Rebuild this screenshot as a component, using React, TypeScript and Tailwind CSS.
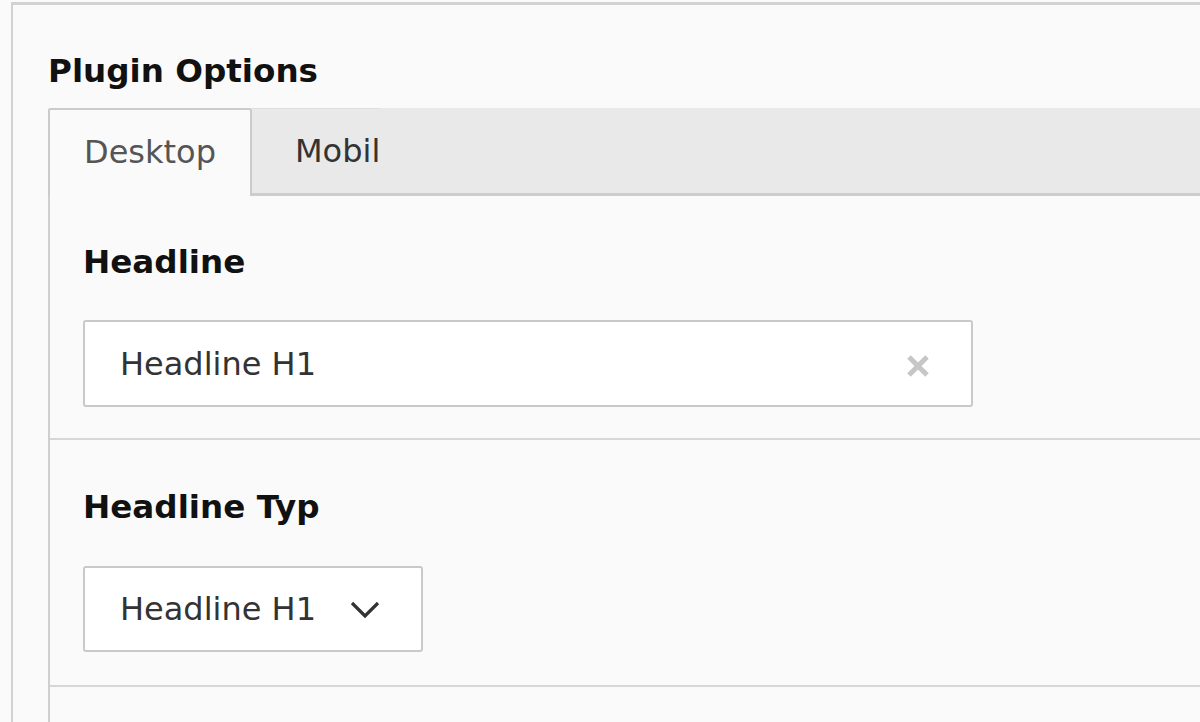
import React from "react";

export default function App() {
  return (
    <div className="h-[722px] w-[1200px] overflow-hidden bg-[#fafafa] pt-[2px] font-['DejaVu_Sans',Verdana,sans-serif] text-[32px]">
      <div className="ml-[11px] h-[760px] border-l-2 border-t-[3px] border-[#d2d2d2] bg-[#fafafa] pl-[35px] pt-[44px]">
        <div className="text-[32.6px] font-bold leading-[44px] text-[#111]">Plugin Options</div>

        <div className="mt-[15px] flex h-[88px] border-b-[3px] border-[#cdcdcd] bg-[#e9e9e9]">
          <div className="-mb-[3px] flex h-[88px] w-[204px] items-center rounded-t-[3px] border-2 border-b-0 border-[#cbcbcb] bg-[#fafafa] pb-[2px] pl-[34px] text-[#555]">
            Desktop
          </div>
          <div className="flex items-center border-t border-[#dedede] pl-[43px] text-[#333]">Mobil</div>
        </div>

        <div className="h-[600px] border-l-2 border-[#cfcfcf]">
          <div className="border-b-2 border-[#d6d6d6] pb-[31px] pl-[33px] pt-[44px]">
            <div className="text-[32.6px] font-bold leading-[44px] text-[#111]">Headline</div>
            <div className="mt-[36px] flex h-[87px] w-[890px] items-center justify-between rounded-[3px] border-2 border-[#c9c9c9] bg-white pl-[35px] pr-[41px] text-[#333]">
              <span>Headline H1</span>
              <svg width="24" height="24" viewBox="0 0 24 24" className="mt-[4px]">
                <path d="M3 3 L21 21 M21 3 L3 21" stroke="#c6c6c6" strokeWidth="5" strokeLinecap="butt" fill="none" />
              </svg>
            </div>
          </div>

          <div className="border-b-2 border-[#d6d6d6] pb-[33px] pl-[33px] pt-[45px]">
            <div className="text-[32.6px] font-bold leading-[44px] text-[#111]">Headline Typ</div>
            <div className="mt-[37px] flex h-[86px] w-[340px] items-center justify-between rounded-[3px] border-2 border-[#c9c9c9] bg-white pl-[35px] pr-[41px] text-[#333]">
              <span>Headline H1</span>
              <svg width="30" height="18" viewBox="0 0 30 18" className="mt-[2px]">
                <path d="M2 2 L15 15 L28 2" stroke="#333" strokeWidth="3.2" fill="none" />
              </svg>
            </div>
          </div>
        </div>
      </div>
    </div>
  );
}
